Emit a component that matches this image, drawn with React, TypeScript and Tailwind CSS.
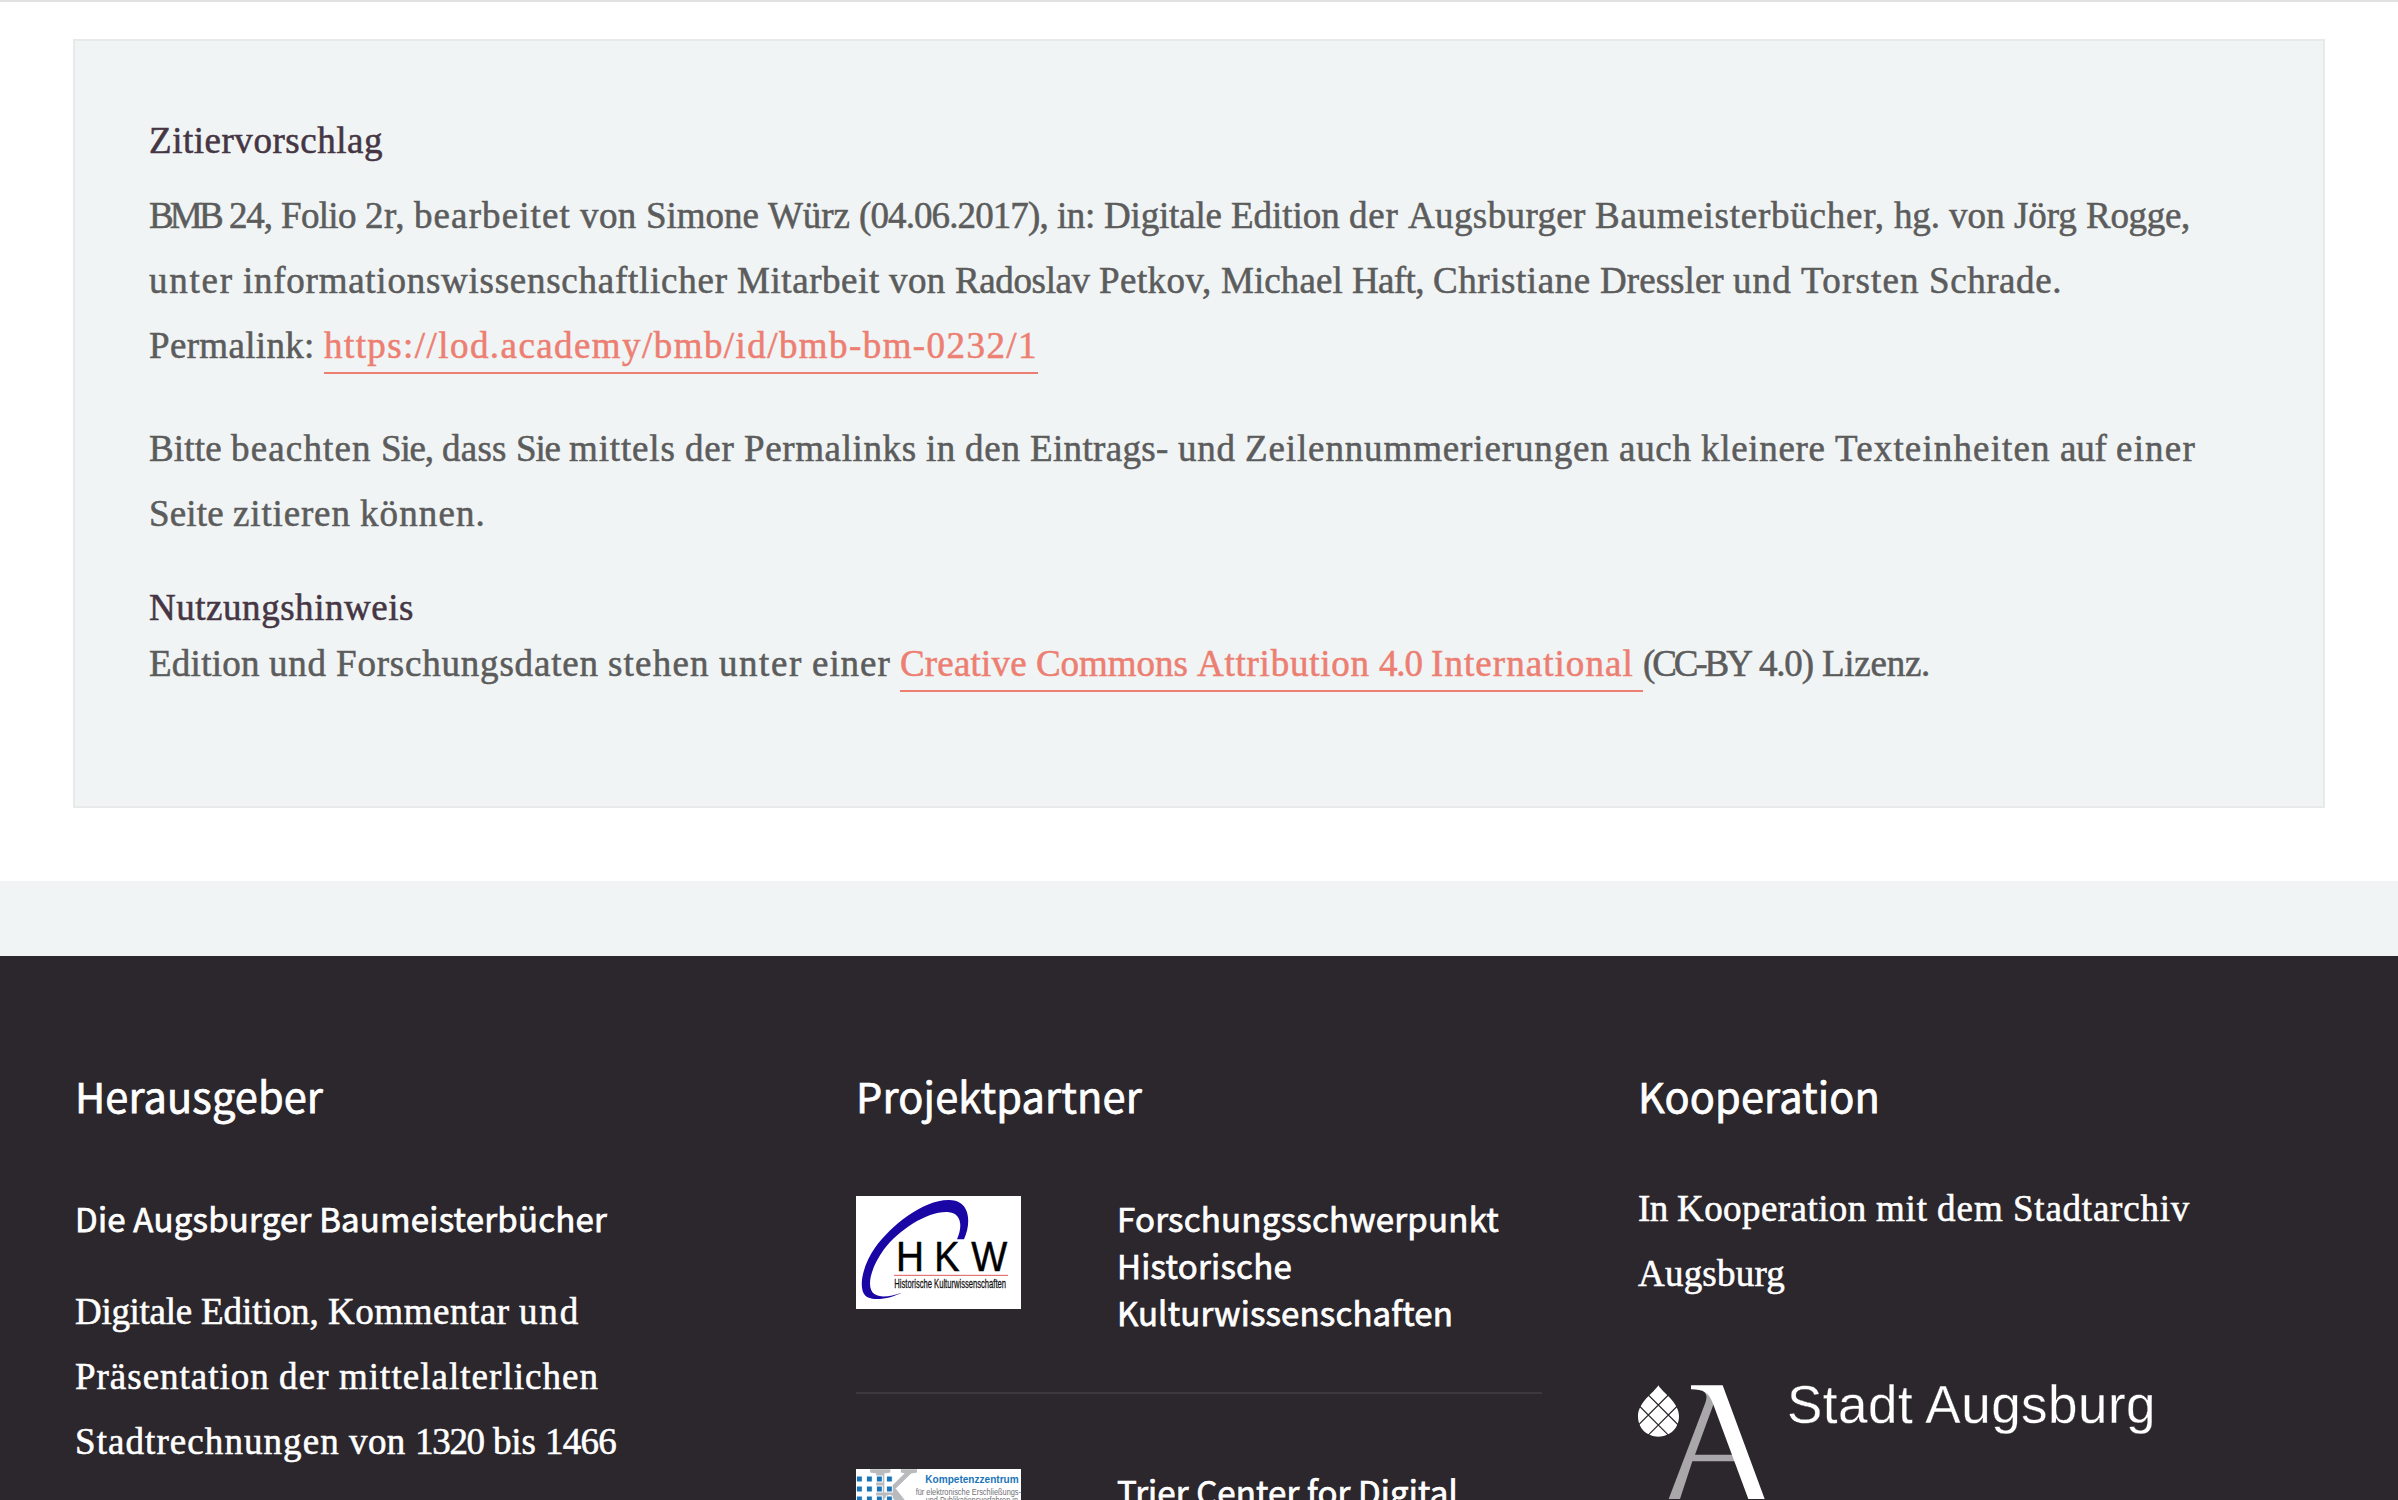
import { useLayoutEffect, useRef, useState } from 'react';
import type { ReactNode } from 'react';

const SERIF = "font-['Liberation_Serif',serif] text-[37px] leading-[65px] [-webkit-text-stroke:0.55px_currentColor]";
const SANS = "font-['Noto_Sans_CJK_SC',sans-serif] [-webkit-text-stroke:0.75px_currentColor]";

/** Width of the blank between two words of the serif face. */
const BLANK = 9.25;

/** A run of text tracked so that it takes exactly `width` pixels. */
function Run({ text, width }: { text: string; width: number }) {
  const ref = useRef<HTMLSpanElement>(null);
  const [spacing, setSpacing] = useState(0);
  useLayoutEffect(() => {
    const el = ref.current;
    if (!el) return;
    const natural = el.getBoundingClientRect().width;
    setSpacing((width - natural) / text.length);
  }, [text, width]);
  return (
    <span ref={ref} className="inline-block whitespace-pre" style={{ letterSpacing: spacing }}>
      {text}
    </span>
  );
}

/** Words given with their starting positions; `end` is the end of the line. */
function Words({ items, end, trailing = false }: { items: [string, number][]; end: number; trailing?: boolean }) {
  return (
    <>
      {items.map(([word, start], i) => {
        const last = i === items.length - 1;
        const next = last ? end : items[i + 1][1];
        const blank = !last || trailing;
        return (
          <span key={i} className="whitespace-pre">
            <Run text={word} width={next - start - (blank ? BLANK : 0)} />
            {blank ? ' ' : ''}
          </span>
        );
      })}
    </>
  );
}

function Line({ children }: { children: ReactNode }) {
  return <span className="block whitespace-nowrap">{children}</span>;
}

function HkwLogo() {
  return (
    <svg viewBox="48 48 495 339" className="mt-[2px] block h-[113px] w-[165px] shrink-0 bg-white">
      <path
        fill="#1a05a5"
        d="M372 178C394 128 392 62 328 60C250 58 152 138 106 202C66 258 52 330 80 350C106 366 158 352 185 338C152 350 120 354 103 342C78 324 90 266 132 208C178 148 262 94 322 96C366 98 368 140 351 178Z"
      />
      <g fontFamily="Liberation Sans, sans-serif" fontSize="125" fill="#000" stroke="#000" strokeWidth="1.5">
        <text x="168" y="273" textLength="84" lengthAdjust="spacingAndGlyphs">H</text>
        <text x="283" y="273" textLength="76" lengthAdjust="spacingAndGlyphs">K</text>
        <text x="394" y="273" textLength="108" lengthAdjust="spacingAndGlyphs">W</text>
      </g>
      <path d="M162 286H504" stroke="#dd5a5a" strokeWidth="3" />
      <text
        x="163"
        y="325"
        fontFamily="Liberation Sans, sans-serif"
        fontSize="37"
        fill="#111"
        stroke="#111"
        strokeWidth="0.8"
        textLength="335"
        lengthAdjust="spacingAndGlyphs"
      >
        Historische Kulturwissenschaften
      </text>
    </svg>
  );
}

function KompetenzLogo() {
  const cols = [51, 81, 111, 141];
  const rows = [110, 140, 170, 200];
  return (
    <svg viewBox="48 87 495 339" className="mt-[2px] block h-[113px] w-[165px] shrink-0 bg-white">
      <text x="86" y="232" fontFamily="Liberation Serif, serif" fontSize="216" fill="#b9babd" stroke="#b9babd" strokeWidth="4">
        K
      </text>
      {rows.map((y) =>
        cols.map((x) => (
          <rect key={`${x}-${y}`} x={x - 2} y={y - 2} width="18" height="18" fill="#1a74b8" stroke="#fff" strokeWidth="3" />
        )),
      )}
      <g fontFamily="Liberation Sans, sans-serif">
        <text x="256" y="128" fontSize="34" fontWeight="700" fill="#1a74b8" textLength="280" lengthAdjust="spacingAndGlyphs">
          Kompetenzzentrum
        </text>
        <g fontSize="27" fill="#6f7074">
          <text x="227" y="164" textLength="316" lengthAdjust="spacingAndGlyphs">für elektronische Erschließungs-</text>
          <text x="257" y="189" textLength="277" lengthAdjust="spacingAndGlyphs">und Publikationsverfahren in</text>
        </g>
      </g>
    </svg>
  );
}

function AugsburgMark() {
  return (
    <svg viewBox="54 45 384 345" className="block h-[115px] w-[128px] shrink-0">
      <path fill="#fff" d="M115 46C127 68 177 96 177 139C177 175 150 200 115 200C80 200 54 175 54 139C54 96 103 68 115 46Z" />
      <path
        d="M85 75L178 168M58 108L146 196M145 75L52 168M172 108L84 196"
        stroke="#2c272c"
        strokeWidth="3.5"
        fill="none"
      />
      <path fill="#a9a7a9" d="M246 58C260 72 263 80 256 98L146 387H180L217 274H350L340 254H225L283 96L268 60Z" />
      <path fill="#fff" d="M213 46H308L434 387H385L278 98C266 68 250 58 213 58Z" />
    </svg>
  );
}

function Heading({ text, width }: { text: string; width: number }) {
  return (
    <h2 className={`${SANS} text-[41.5px] leading-[60px]`}>
      <Run text={text} width={width} />
    </h2>
  );
}

function Partner({ logo, lines }: { logo: ReactNode; lines: [string, number][] }) {
  return (
    <div className="flex">
      {logo}
      <h3 className={`${SANS} mt-px ml-[96px] text-[33px] leading-[47px]`}>
        {lines.map(([text, width]) => (
          <Line key={text}>
            <Run text={text} width={width} />
          </Line>
        ))}
      </h3>
    </div>
  );
}

export default function App() {
  return (
    <div className="flex h-[1500px] flex-col overflow-hidden bg-white">
      <main className={`${SERIF} h-[881px] shrink-0 border-t-2 border-[#e1e1e1] pt-[37px] text-[#5c5c5c]`}>
        <section className="mx-[73px] h-[769px] border-2 border-[#e8eaea] bg-[#f0f4f5] px-[74px] pt-[67px]">
          <h4 className="mb-[10px] text-[#463644]">
            <Run text="Zitiervorschlag" width={234} />
          </h4>
          <p className="mb-[38px]">
            <Line>
              <Words
                items={[
                  ['BMB', 149],
                  ['24,', 229],
                  ['Folio', 281],
                  ['2r,', 365],
                  ['bearbeitet', 414],
                  ['von', 580],
                  ['Simone', 646],
                  ['Würz', 768],
                  ['(04.06.2017),', 859],
                  ['in:', 1057],
                  ['Digitale', 1104],
                  ['Edition', 1231],
                  ['der', 1349],
                  ['Augsburger', 1408],
                  ['Baumeisterbücher,', 1595],
                  ['hg.', 1894],
                  ['von', 1949],
                  ['Jörg', 2014],
                  ['Rogge,', 2086],
                ]}
                end={2190}
              />
            </Line>
            <Line>
              <Words
                items={[
                  ['unter', 149],
                  ['informationswissenschaftlicher', 243],
                  ['Mitarbeit', 737],
                  ['von', 889],
                  ['Radoslav', 955],
                  ['Petkov,', 1099],
                  ['Michael', 1221],
                  ['Haft,', 1352],
                  ['Christiane', 1433],
                  ['Dressler', 1600],
                  ['und', 1733],
                  ['Torsten', 1801],
                  ['Schrade.', 1929],
                ]}
                end={2062}
              />
            </Line>
            <Line>
              <Words items={[['Permalink:', 149]]} end={324} trailing />
              <a className="border-b-2 border-[#ed7f72] pb-[6px] text-[#ed7f72]">
                <Run text="https://lod.academy/bmb/id/bmb-bm-0232/1" width={714} />
              </a>
            </Line>
          </p>
          <p>
            <Line>
              <Words
                items={[
                  ['Bitte', 149],
                  ['beachten', 231],
                  ['Sie,', 381],
                  ['dass', 442],
                  ['Sie', 516],
                  ['mittels', 569],
                  ['der', 685],
                  ['Permalinks', 744],
                  ['in', 926],
                  ['den', 965],
                  ['Eintrags-', 1030],
                  ['und', 1178],
                  ['Zeilennummerierungen', 1245],
                  ['auch', 1619],
                  ['kleinere', 1701],
                  ['Texteinheiten', 1835],
                  ['auf', 2060],
                  ['einer', 2116],
                ]}
                end={2196}
              />
            </Line>
            <Line>
              <Words
                items={[
                  ['Seite', 149],
                  ['zitieren', 233],
                  ['können.', 360],
                ]}
                end={486}
              />
            </Line>
          </p>
          <h4 className="mt-[39px] leading-[46px] text-[#463644]">
            <Run text="Nutzungshinweis" width={265} />
          </h4>
          <p>
            <Line>
              <Words
                items={[
                  ['Edition', 149],
                  ['und', 269],
                  ['Forschungsdaten', 336],
                  ['stehen', 608],
                  ['unter', 719],
                  ['einer', 812],
                ]}
                end={900}
                trailing
              />
              <a className="border-b-2 border-[#ed7f72] pb-[6px] text-[#ed7f72]">
                <Words
                  items={[
                    ['Creative', 900],
                    ['Commons', 1036],
                    ['Attribution', 1197],
                    ['4.0', 1379],
                    ['International', 1431],
                  ]}
                  end={1643}
                  trailing
                />
              </a>
              <Words
                items={[
                  ['(CC-BY', 1643],
                  ['4.0)', 1759],
                  ['Lizenz.', 1822],
                ]}
                end={1930}
              />
            </Line>
          </p>
        </section>
      </main>

      <div className="h-[75px] shrink-0 bg-[#f0f4f5]" />

      <footer className="grid h-[544px] shrink-0 grid-cols-[781px_782px_1fr] bg-[#2c272c] pt-[109px] pl-[75px] text-white">
        <section>
          <Heading text="Herausgeber" width={248} />
          <h3 className={`${SANS} mt-[70px] mb-[37px] text-[33px] leading-[47px]`}>
            <Run text="Die Augsburger Baumeisterbücher" width={532} />
          </h3>
          <p className={SERIF}>
            <Line>
              <Words
                items={[
                  ['Digitale', 75],
                  ['Edition,', 201],
                  ['Kommentar', 328],
                  ['und', 519],
                ]}
                end={580}
              />
            </Line>
            <Line>
              <Words
                items={[
                  ['Präsentation', 75],
                  ['der', 279],
                  ['mittelalterlichen', 339],
                ]}
                end={599}
              />
            </Line>
            <Line>
              <Words
                items={[
                  ['Stadtrechnungen', 75],
                  ['von', 349],
                  ['1320', 415],
                  ['bis', 493],
                  ['1466', 545],
                ]}
                end={616}
              />
            </Line>
          </p>
        </section>

        <section>
          <Heading text="Projektpartner" width={286} />
          <div className="mt-[69px] flex w-[686px] flex-col">
            <div className="h-[200px] border-b-2 border-[#3c383d]">
              <Partner
                logo={<HkwLogo />}
                lines={[
                  ['Forschungsschwerpunkt', 382],
                  ['Historische', 175],
                  ['Kulturwissenschaften', 336],
                ]}
              />
            </div>
            <div className="pt-[73px]">
              <Partner logo={<KompetenzLogo />} lines={[['Trier Center for Digital', 341]]} />
            </div>
          </div>
        </section>

        <section>
          <Heading text="Kooperation" width={242} />
          <p className={`${SERIF} mt-[51px] mb-[79px]`}>
            <Line>
              <Words
                items={[
                  ['In', 1638],
                  ['Kooperation', 1677],
                  ['mit', 1876],
                  ['dem', 1937],
                  ['Stadtarchiv', 2013],
                ]}
                end={2190}
              />
            </Line>
            <Line>
              <Run text="Augsburg" width={147} />
            </Line>
          </p>
          <div className="flex items-start">
            <AugsburgMark />
            <span className="-mt-[10px] ml-[21px] font-['Liberation_Sans',sans-serif] text-[53px] leading-[60px] whitespace-nowrap [-webkit-text-stroke:0.3px_#2c272c]">
              <Run text="Stadt Augsburg" width={369} />
            </span>
          </div>
        </section>
      </footer>
    </div>
  );
}
